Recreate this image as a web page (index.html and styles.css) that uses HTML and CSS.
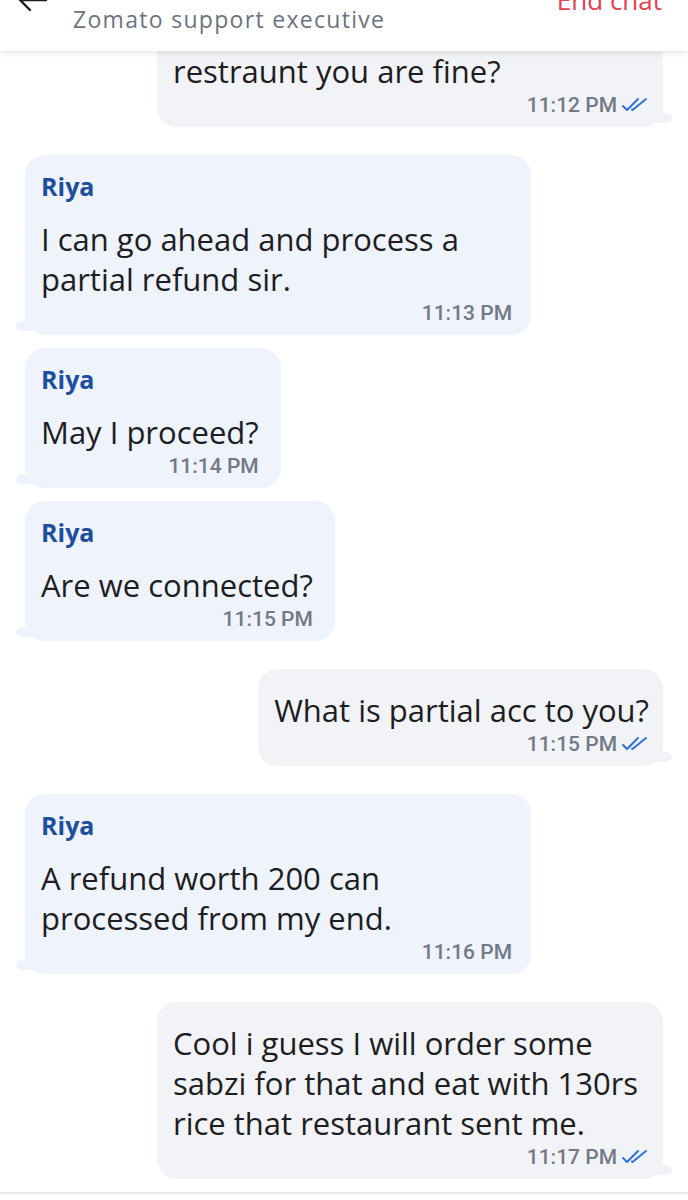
FILE: index.html
```html
<!DOCTYPE html>
<html>
<head>
<meta charset="utf-8">
<link rel="stylesheet" href="styles.css">
</head>
<body>
<div class="screen">
  <header class="topbar">
    <div class="topbar-row">
      <svg class="back" width="32" height="24" viewBox="0 0 32 24"><path d="M30 12H4M14 2L4 12l10 10" fill="none" stroke="#1c1c1c" stroke-width="2.4" stroke-linecap="round" stroke-linejoin="round"/></svg>
      <span class="end-chat">End chat</span>
    </div>
    <div class="subtitle">Zomato support executive</div>
  </header>

  <main class="chat">
    <div class="msg out wide">
      <div class="text">restraunt you are fine?</div>
      <div class="meta"><span class="time">11:12 PM</span><svg class="ticks" width="28" height="16" viewBox="0 0 28 16"><path d="M2 9l4 4L17 2M11 12.5l.5.5L25 2" fill="none" stroke="#2f6fe0" stroke-width="2" stroke-linecap="round" stroke-linejoin="round"/></svg></div>
    </div>

    <div class="msg in wide">
      <div class="name">Riya</div>
      <div class="text">I can go ahead and process a<br>partial refund sir.</div>
      <div class="meta"><span class="time">11:13 PM</span></div>
    </div>

    <div class="msg in">
      <div class="name">Riya</div>
      <div class="text">May I proceed?</div>
      <div class="meta"><span class="time">11:14 PM</span></div>
    </div>

    <div class="msg in">
      <div class="name">Riya</div>
      <div class="text">Are we connected?</div>
      <div class="meta"><span class="time">11:15 PM</span></div>
    </div>

    <div class="msg out">
      <div class="text">What is partial acc to you?</div>
      <div class="meta"><span class="time">11:15 PM</span><svg class="ticks" width="28" height="16" viewBox="0 0 28 16"><path d="M2 9l4 4L17 2M11 12.5l.5.5L25 2" fill="none" stroke="#2f6fe0" stroke-width="2" stroke-linecap="round" stroke-linejoin="round"/></svg></div>
    </div>

    <div class="msg in wide">
      <div class="name">Riya</div>
      <div class="text">A refund worth 200 can<br>processed from my end.</div>
      <div class="meta"><span class="time">11:16 PM</span></div>
    </div>

    <div class="msg out wide">
      <div class="text">Cool i guess I will order some<br>sabzi for that and eat with 130rs<br>rice that restaurant sent me.</div>
      <div class="meta"><span class="time">11:17 PM</span><svg class="ticks" width="28" height="16" viewBox="0 0 28 16"><path d="M2 9l4 4L17 2M11 12.5l.5.5L25 2" fill="none" stroke="#2f6fe0" stroke-width="2" stroke-linecap="round" stroke-linejoin="round"/></svg></div>
    </div>
  </main>

  <footer class="composer"></footer>
</div>
</body>
</html>
```

FILE: styles.css
```css
* { box-sizing: border-box; }
html, body { margin: 0; padding: 0; background: #ffffff; }
body { width: 688px; height: 1200px; overflow: hidden; font-family: "Open Sans", "Noto Sans", sans-serif; color: #1d1d22; }

.screen { display: flex; flex-direction: column; height: 1200px; }

.topbar {
  position: relative;
  z-index: 2;
  height: 51px;
  background: #ffffff;
  box-shadow: 0 2px 6px rgba(0, 0, 0, 0.10);
  overflow: hidden;
  flex: none;
}
.topbar-row {
  display: flex;
  justify-content: space-between;
  align-items: center;
  margin-top: -18px;
  height: 36px;
  padding: 0 26px 0 16px;
}
.back { display: block; }
.end-chat { color: #e3404f; font-size: 26px; }
.subtitle {
  margin-top: -14px;
  padding-left: 73px;
  font-size: 23px;
  letter-spacing: 1.3px;
  color: #6d7280;
  line-height: 30px;
}

.chat {
  display: flex;
  flex-direction: column;
  margin-top: -21px;
  position: relative;
  z-index: 1;
  flex: none;
}

.msg {
  position: relative;
  max-width: 506px;
  border-radius: 20px;
  padding: 21px 19px 10px 16px;
}
.msg + .msg { margin-top: 28px; }
.msg.in + .msg.in { margin-top: 13px; }
.msg.wide { width: 506px; }

.msg.in { align-self: flex-start; margin-left: 25px; background: #eff3fc; padding-top: 16px; padding-right: 22px; }
.msg.out { align-self: flex-end; margin-right: 25px; background: #f2f3f7; padding-right: 14px; }

.msg.in::before,
.msg.out::before {
  content: "";
  position: absolute;
  bottom: 4px;
  width: 16px;
  height: 10px;
  background: inherit;
}
.msg.in::before { left: -9px; border-radius: 10px 0 4px 10px; }
.msg.out::before { right: -9px; border-radius: 0 10px 10px 4px; }

.name {
  color: #1e4f9f;
  font-weight: 700;
  font-size: 25px;
  line-height: 30px;
  margin-bottom: 18px;
}
.msg.in.wide .meta { margin-right: -3px; }
.text {
  font-size: 31px;
  line-height: 40px;
  white-space: nowrap;
}
.meta {
  display: flex;
  justify-content: flex-end;
  align-items: center;
  gap: 4px;
  height: 24px;
  margin-top: 2px;
}
.time {
  font-family: Roboto, "Noto Sans", sans-serif;
  font-weight: 500;
  font-size: 21px;
  color: #737987;
}
.ticks { display: block; }

.composer {
  margin-top: 13px;
  border-top: 2px solid #e6e7ea;
  flex: 1;
  background: #ffffff;
}
```
